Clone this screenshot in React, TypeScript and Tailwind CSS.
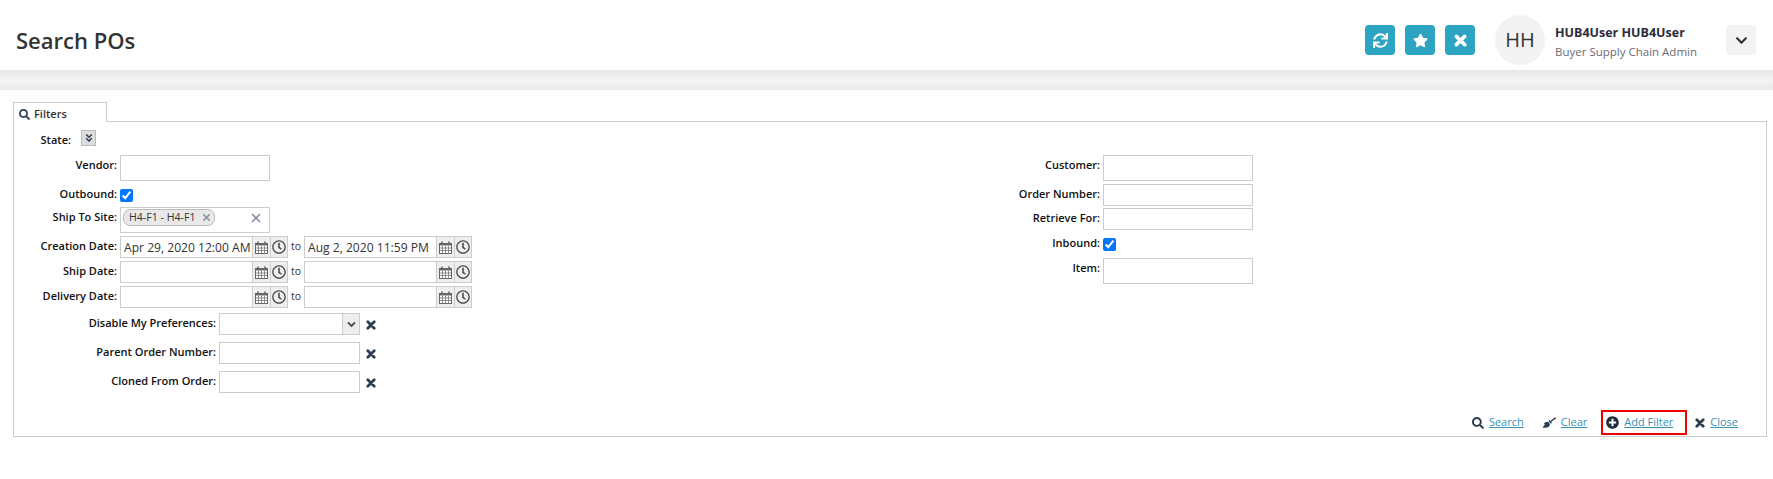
import React from 'react';
import { FaSync, FaStar, FaSearch, FaBroom, FaPlusCircle, FaRegClock, FaAngleDoubleDown, FaChevronDown, FaAngleDown } from 'react-icons/fa';
import { X } from 'lucide-react';

const inputBorder = 'border border-[#cccccc] bg-white';

const CalendarIcon = () => (
  <svg width="13" height="13" viewBox="0 0 13 13" className="text-[#666]">
    <rect x="0.5" y="2.5" width="12" height="10" fill="#fff" stroke="currentColor" />
    <rect x="0.5" y="2.5" width="12" height="2" fill="currentColor" />
    <path d="M3 0.5v3M10 0.5v3" stroke="currentColor" strokeWidth="1.6" />
    <path d="M3.5 5v7M6.5 5v7M9.5 5v7M1 7h11M1 9.5h11" stroke="currentColor" strokeWidth="0.7" />
  </svg>
);

// chunky times glyph, the FaTimes from the package is too thin here
const TimesIcon = ({ size, className }: { size: number; className?: string }) => (
  <svg width={size} height={size} viewBox="0 0 10 10" className={className}>
    <path d="M1.8 1.8L8.2 8.2M8.2 1.8L1.8 8.2" stroke="currentColor" strokeWidth="2.8" strokeLinecap="round" />
  </svg>
);

const Label = ({ text, className }: { text: string; className: string }) => (
  <span className={`shrink-0 pt-[2px] pr-[3px] text-right text-[11px] leading-[16px] font-semibold text-[#111111] ${className}`}>
    {text}
  </span>
);

const DateField = ({ value }: { value?: string }) => (
  <div className="flex h-[22px] w-[168px]">
    <input
      readOnly
      value={value ?? ''}
      className={`h-full w-[133px] min-w-0 pl-[3px] text-[12.1px] text-[#333] outline-none ${inputBorder}`}
    />
    <span className="flex h-full w-[17px] items-center justify-center border-y border-[#cccccc] bg-[#eeeeee]">
      <CalendarIcon />
    </span>
    <span className="flex h-full w-[18px] items-center justify-center border border-[#cccccc] bg-[#eeeeee] text-[#444]">
      <FaRegClock size={14} />
    </span>
  </div>
);

const DateRow = ({ label, from, to, className }: { label: string; from?: string; to?: string; className: string }) => (
  <div className={`flex ${className}`}>
    <Label text={label} className="w-[106px]" />
    <DateField value={from} />
    <span className="w-[16px] pt-[2px] text-center text-[10.5px] leading-[16px] text-[#333]">to</span>
    <DateField value={to} />
  </div>
);

const TextRow = ({ label, height, labelWidth, className }: { label: string; height: string; labelWidth: string; className?: string }) => (
  <div className={`flex ${className ?? ''}`}>
    <Label text={label} className={labelWidth} />
    <input readOnly className={`w-[150px] outline-none ${height} ${inputBorder}`} />
  </div>
);

const CheckRow = ({ label, labelWidth, className }: { label: string; labelWidth: string; className?: string }) => (
  <div className={`flex h-[23px] ${className ?? ''}`}>
    <Label text={label} className={labelWidth} />
    <input type="checkbox" defaultChecked readOnly className="mt-[5px] h-[13px] w-[13px] m-0" />
  </div>
);

const ExtraRow = ({ label, className, select }: { label: string; className: string; select?: boolean }) => (
  <div className={`flex ${className}`}>
    <Label text={label} className="w-[205px]" />
    <div className={`flex h-[22px] w-[141px] justify-end ${inputBorder}`}>
      {select && (
        <span className="flex w-[17px] items-center justify-center border-l border-[#cccccc] bg-[#eeeeee] text-[#555]">
          <FaAngleDown size={13} />
        </span>
      )}
    </div>
    <TimesIcon size={10} className="mt-[7px] ml-[6px] text-[#2c3e50]" />
  </div>
);

const ActionLink = ({ icon, text, className }: { icon: React.ReactNode; text: string; className?: string }) => (
  <span className={`flex items-center gap-[5px] text-[11px] text-[#3b8fb3] ${className ?? ''}`}>
    {icon}
    <span className="underline">{text}</span>
  </span>
);

export default function App() {
  return (
    <div className="min-h-[479px] bg-white font-['Open_Sans',sans-serif]">
      <header className="flex h-[70px] items-center bg-white pt-[10px] pr-[17px] pl-[16px]">
        <h1 className="text-[22px] font-semibold text-[#333]">Search POs</h1>
        <div className="ml-auto flex items-center gap-[10px]">
          <button className="flex h-[30px] w-[30px] items-center justify-center rounded-[4px] bg-[#2ca4c2] text-white">
            <FaSync size={15} />
          </button>
          <button className="flex h-[30px] w-[30px] items-center justify-center rounded-[4px] bg-[#2ca4c2] text-white">
            <FaStar size={15} />
          </button>
          <button className="flex h-[30px] w-[30px] items-center justify-center rounded-[4px] bg-[#2ca4c2] text-white">
            <TimesIcon size={13} />
          </button>
        </div>
        <div className="ml-[20px] flex h-[50px] w-[50px] items-center justify-center rounded-full bg-[#f3f3f3] text-[20px] text-[#333]">
          HH
        </div>
        <div className="ml-[10px] w-[171px] pt-[3px] leading-[19px]">
          <div className="text-[12.5px] font-bold text-[#2b2b3a]">HUB4User HUB4User</div>
          <div className="text-[11.5px] text-[#6b6b75]">Buyer Supply Chain Admin</div>
        </div>
        <button className="flex h-[30px] w-[30px] items-center justify-center rounded-[4px] bg-[#f3f3f3] text-[#2b2b3a]">
          <FaChevronDown size={13} />
        </button>
      </header>
      <div className="h-[20px] bg-gradient-to-b from-[#e6e6e6] via-[#f4f4f4] to-[#e9e9e9]" />

      <main className="pt-[12px] pr-[6px] pl-[13px]">
        <div className="-mb-px relative z-10 flex h-[20px] w-[94px] items-center gap-[4px] border border-b-0 border-[#cccccc] bg-white pt-[3px] pl-[5px] text-[11px] font-semibold text-[#333]">
          <FaSearch size={11} className="text-[#2c3e50]" />
          Filters
        </div>
        <div className="flex h-[316px] flex-col border border-[#cccccc]">
          <div className="flex">
            <div className="w-[986px] shrink-0 pt-[8px]">
              <div className="flex h-[25px]">
                <Label text="State:" className="w-[60px]" />
                <span className="ml-[7px] flex h-[16px] w-[15px] items-center justify-center border border-[#bbbbbb] bg-[#dddddd] text-[#2c3e50]">
                  <FaAngleDoubleDown size={10} />
                </span>
              </div>
              <TextRow label="Vendor:" labelWidth="w-[106px]" height="h-[26px]" />
              <CheckRow label="Outbound:" labelWidth="w-[106px]" className="mt-[3px]" />
              <div className="flex">
                <Label text="Ship To Site:" className="w-[106px]" />
                <div className={`flex h-[26px] w-[150px] items-start pt-px pr-[6px] pl-[2px] ${inputBorder}`}>
                  <span className="flex h-[17px] items-center gap-[5px] rounded-[7px] border border-[#bbbbbb] bg-[#e8e8e8] pr-[2px] pl-[5px] text-[10.6px] text-[#333]">
                    H4-F1 - H4-F1
                    <X size={11} strokeWidth={3.5} className="text-[#8a93a6]" />
                  </span>
                  <X size={14} strokeWidth={3} className="mt-[2px] ml-auto text-[#8a93a6]" />
                </div>
              </div>
              <DateRow label="Creation Date:" from="Apr 29, 2020 12:00 AM" to="Aug 2, 2020 11:59 PM" className="mt-[3px]" />
              <DateRow label="Ship Date:" className="mt-[3px]" />
              <DateRow label="Delivery Date:" className="mt-[3px]" />
              <ExtraRow label="Disable My Preferences:" select className="mt-[5px]" />
              <ExtraRow label="Parent Order Number:" className="mt-[7px]" />
              <ExtraRow label="Cloned From Order:" className="mt-[7px]" />
            </div>
            <div className="pt-[33px]">
              <TextRow label="Customer:" labelWidth="w-[103px]" height="h-[26px]" />
              <TextRow label="Order Number:" labelWidth="w-[103px]" height="h-[22px]" className="mt-[3px]" />
              <TextRow label="Retrieve For:" labelWidth="w-[103px]" height="h-[22px]" className="mt-[2px]" />
              <CheckRow label="Inbound:" labelWidth="w-[103px]" className="mt-[3px]" />
              <TextRow label="Item:" labelWidth="w-[103px]" height="h-[26px]" className="mt-[2px]" />
            </div>
          </div>
          <div className="mt-auto flex items-center justify-end pr-[28px] pb-px">
            <ActionLink icon={<FaSearch size={12} className="text-[#2c3e50]" />} text="Search" />
            <ActionLink icon={<FaBroom size={13} className="text-[#2c3e50]" />} text="Clear" className="ml-[19px]" />
            <div className="ml-[14px] flex h-[25px] w-[86px] items-center border-2 border-[#ee0000] pl-[3px]">
              <ActionLink icon={<FaPlusCircle size={13} className="text-[#1f2d3d]" />} text="Add Filter" />
            </div>
            <ActionLink icon={<TimesIcon size={10} className="text-[#2c3e50]" />} text="Close" className="ml-[8px]" />
          </div>
        </div>
      </main>
    </div>
  );
}
